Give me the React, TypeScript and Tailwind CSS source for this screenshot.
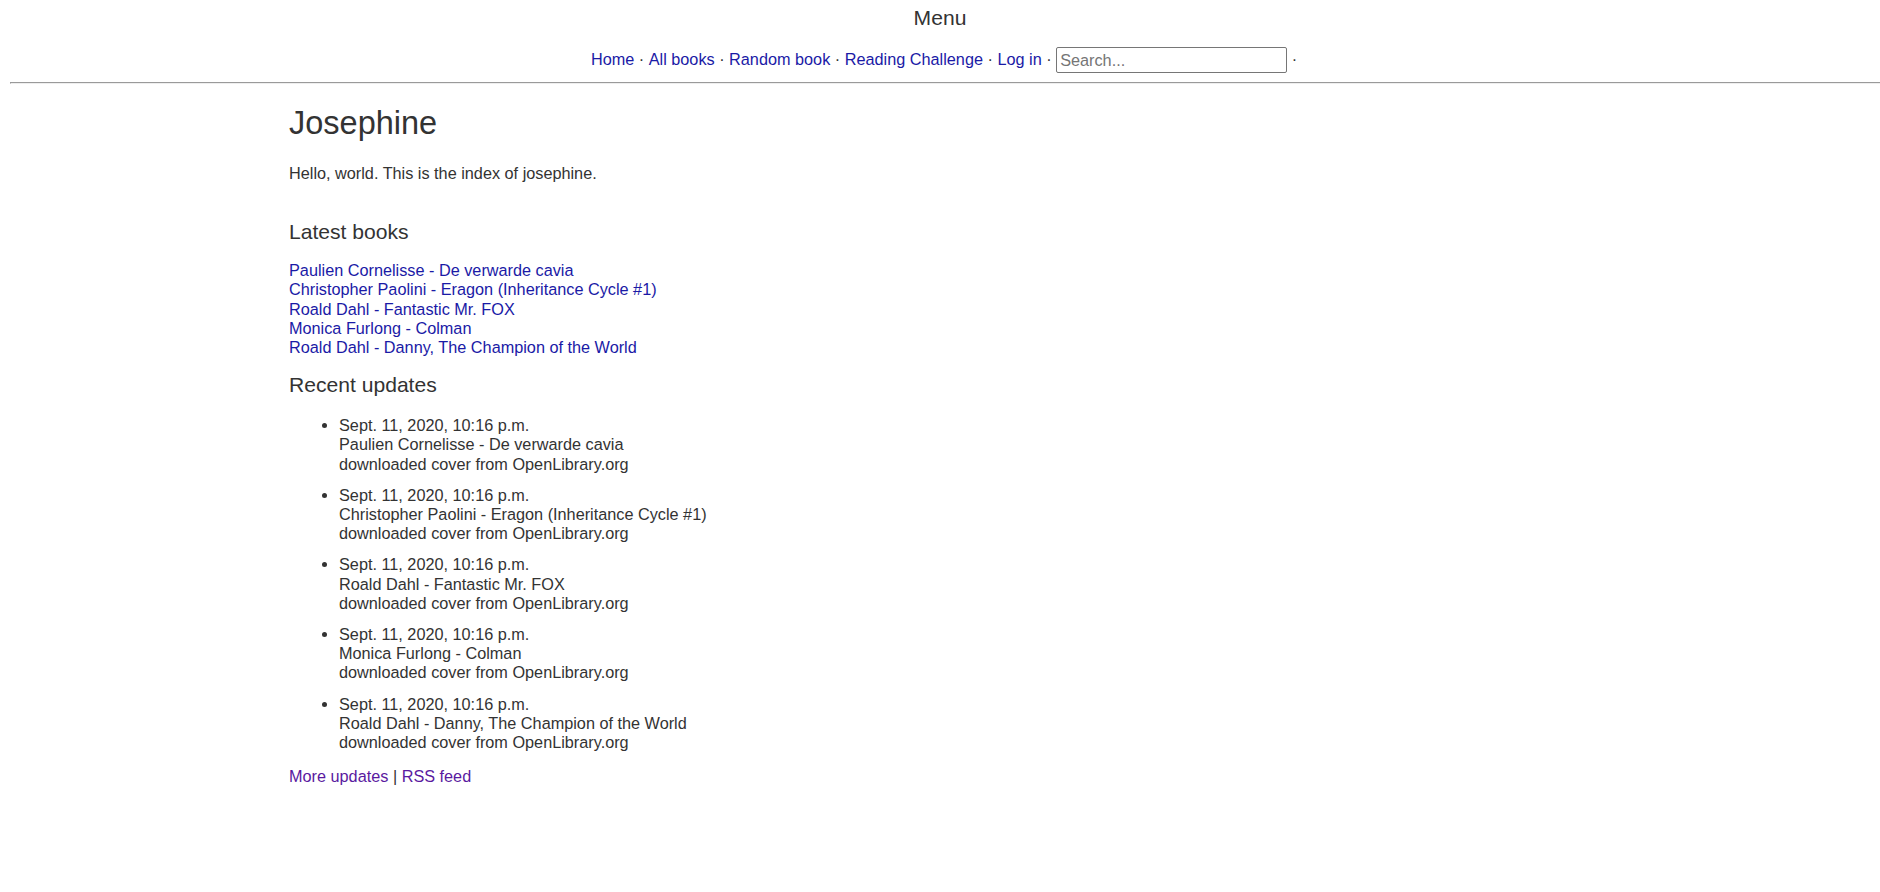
const navLinks = ["Home", "All books", "Random book", "Reading Challenge", "Log in"];

const latestBooks = [
  "Paulien Cornelisse - De verwarde cavia",
  "Christopher Paolini - Eragon (Inheritance Cycle #1)",
  "Roald Dahl - Fantastic Mr. FOX",
  "Monica Furlong - Colman",
  "Roald Dahl - Danny, The Champion of the World",
];

const App = () => {
  return (
    <div className="min-h-screen bg-white font-['Liberation_Sans',Arial,sans-serif] text-[16.25px] leading-[19.2px] text-[#333]">
      <header>
        <div className="pt-[5px] text-center text-[21.1px] leading-[25px]">Menu</div>
        <nav className="mt-[17px] flex h-[26px] items-center justify-center whitespace-pre pl-[8px]">
          {navLinks.map((label) => (
            <span key={label}>
              <a href="#" className="text-[#1a1aa6]">
                {label}
              </a>
              {" · "}
            </span>
          ))}
          <input
            type="text"
            placeholder="Search..."
            className="h-[26px] w-[231px] rounded-[2px] border border-[#767676] px-[3px] text-[16.25px] text-[#333] placeholder:text-[#757575]"
          />
          <span>{" ·"}</span>
        </nav>
      </header>

      <div className="mt-[9px] ml-[10px] border-t border-l border-t-[#9a9a9a] border-l-[#9a9a9a] border-b border-b-[#eeeeee]" />

      <main className="pl-[289px]">
        <h1 className="mt-[20px] text-[32.5px] leading-[39px]">Josephine</h1>
        <p className="mt-[21px]">Hello, world. This is the index of josephine.</p>

        <h2 className="mt-[36px] text-[21.1px] leading-[25px]">Latest books</h2>
        <div className="mt-[17px] flex flex-col">
          {latestBooks.map((book) => (
            <a key={book} href="#" className="text-[#1a1aa6]">
              {book}
            </a>
          ))}
        </div>

        <h2 className="mt-[15px] text-[21.1px] leading-[25px]">Recent updates</h2>
        <ul className="mt-[19px] flex list-disc flex-col gap-[12px] pl-[50px]">
          {latestBooks.map((book) => (
            <li key={book}>
              Sept. 11, 2020, 10:16 p.m.
              <br />
              {book}
              <br />
              downloaded cover from OpenLibrary.org
            </li>
          ))}
        </ul>

        <div className="mt-[15px]">
          <a href="#" className="text-[#5a1aa0]">
            More updates
          </a>{" "}
          |{" "}
          <a href="#" className="text-[#5a1aa0]">
            RSS feed
          </a>
        </div>
      </main>
    </div>
  );
};

export default App;
